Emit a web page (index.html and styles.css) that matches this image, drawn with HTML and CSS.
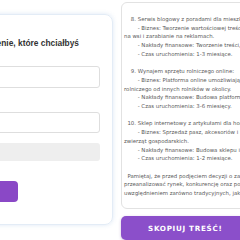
FILE: index.html
```html
<!DOCTYPE html>
<html lang="pl">
<head>
<meta charset="utf-8">
<title>Generator</title>
<link rel="stylesheet" href="styles.css">
</head>
<body>
<div class="page">
  <section class="form-card">
    <h2 class="form-title">Wpisz wyrażenie, które chciałbyś</h2>
    <div class="field"></div>
    <div class="field"></div>
    <div class="field field-muted"></div>
    <button class="generate">Generuj</button>
  </section>
  <section class="result">
    <pre class="result-box">    8. Serwis blogowy z poradami dla mieszkańców wsi:
        - Biznes: Tworzenie wartościowej treści dla mieszkańców
na wsi i zarabianie na reklamach.
        - Nakłady finansowe: Tworzenie treści, hosting strony.
        - Czas uruchomienia: 1-3 miesiące.

    9. Wynajem sprzętu rolniczego online:
        - Biznes: Platforma online umożliwiająca wynajem sprzętu
rolniczego od innych rolników w okolicy.
        - Nakłady finansowe: Budowa platformy online.
        - Czas uruchomienia: 3-6 miesięcy.

  10. Sklep internetowy z artykułami dla hodowców:
        - Biznes: Sprzedaż pasz, akcesoriów i leków dla
zwierząt gospodarskich.
        - Nakłady finansowe: Budowa sklepu internetowego.
        - Czas uruchomienia: 1-2 miesiące.

  Pamiętaj, że przed podjęciem decyzji o założeniu biznesu warto
przeanalizować rynek, konkurencję oraz potencjalnych klientów, z
uwzględnieniem zarówno tradycyjnych, jak i internetowych kanałów.</pre>
    <button class="copy">SKOPIUJ TREŚĆ!</button>
  </section>
</div>
</body>
</html>
```
FILE: styles.css
```css
html, body {
  margin: 0;
  padding: 0;
  background: #ffffff;
  overflow: hidden;
  width: 240px;
  height: 240px;
}

.page {
  display: flex;
  align-items: flex-start;
  gap: 8px;
  margin-left: -67px;
  font-family: "Liberation Sans", Arial, sans-serif;
}

.form-card {
  flex: 0 0 auto;
  box-sizing: border-box;
  width: 180px;
  height: 211px;
  margin-top: 14px;
  padding: 23px 12px 0 12px;
  border: 1px solid #e3ecf6;
  border-radius: 8px;
  box-shadow: 0 0 4px rgba(120, 165, 215, 0.25);
  display: flex;
  flex-direction: column;
  align-items: stretch;
}

.form-title {
  margin: 0;
  padding-right: 21px;
  font-size: 8.4px;
  line-height: 10px;
  font-weight: bold;
  color: #333333;
  white-space: nowrap;
  text-align: right;
}

.field {
  box-sizing: border-box;
  height: 22px;
  margin-top: 18px;
  border: 1px solid #dedede;
  border-radius: 3px;
  background: #ffffff;
}

.field + .field {
  margin-top: 24px;
  height: 21px;
}

.field.field-muted {
  margin-top: 10px;
  height: 18px;
  border: none;
  background: #eeeeee;
}

.generate {
  align-self: flex-start;
  width: 72px;
  height: 21px;
  margin-top: 20px;
  border: none;
  border-radius: 4px;
  background: #8a48c6;
  color: #ffffff;
  font-size: 7px;
  font-weight: bold;
}

.result {
  flex: 0 0 auto;
  width: 160px;
  margin-top: 2px;
  display: flex;
  flex-direction: column;
  gap: 7px;
}

.result-box {
  box-sizing: border-box;
  height: 207px;
  margin: 0;
  padding: 12px 2px;
  border: 1px solid #e2e2e2;
  border-radius: 6px;
  font-family: "DejaVu Sans", sans-serif;
  font-size: 5.4px;
  line-height: 8.7px;
  color: #5a5a5a;
  white-space: pre;
  overflow: hidden;
}

.copy {
  height: 24px;
  border: none;
  border-radius: 5px;
  background: #8b4fca;
  color: #ffffff;
  font-family: "DejaVu Sans", sans-serif;
  font-size: 7.2px;
  font-weight: bold;
  letter-spacing: 0.7px;
  text-align: left;
  padding-left: 27px;
  box-shadow: 0 1px 3px rgba(90, 40, 140, 0.3);
}
```
